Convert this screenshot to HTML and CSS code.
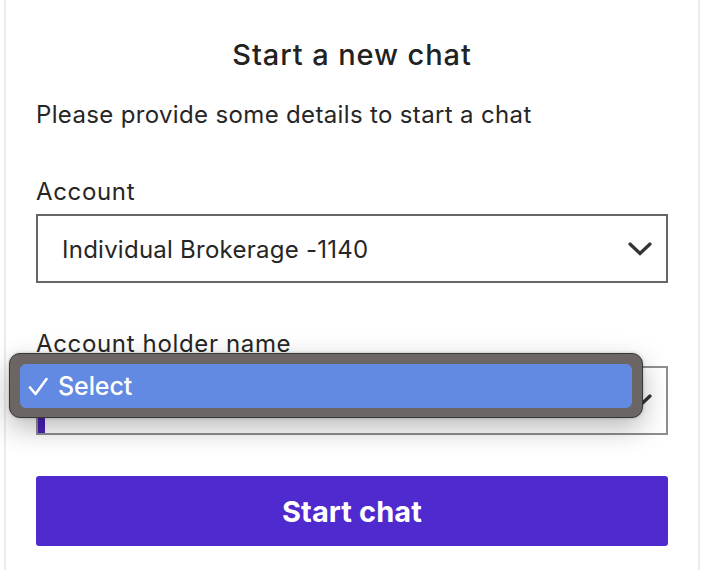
FILE: index.html
```html
<!DOCTYPE html>
<html lang="en">
<head>
<meta charset="utf-8">
<title>Start a new chat</title>
<link rel="stylesheet" href="styles.css">
</head>
<body>
<div class="panel">
  <h1 class="title">Start a new chat</h1>
  <p class="intro">Please provide some details to start a chat</p>
  <div class="field">
    <label class="label">Account</label>
    <div class="select">
      <span class="value">Individual Brokerage -1140</span>
      <svg class="chev" width="24" height="14" viewBox="0 0 24 14"><path d="M2 2 L12 11.5 L22 2" fill="none" stroke="#333" stroke-width="3.2" stroke-linecap="round" stroke-linejoin="miter"/></svg>
    </div>
  </div>
  <div class="field field-open">
    <label class="label">Account holder name</label>
    <div class="select select-open">
      <span class="value"></span>
      <svg class="chev" width="24" height="14" viewBox="0 0 24 14"><path d="M2 2 L12 11.5 L22 2" fill="none" stroke="#333" stroke-width="3.2" stroke-linecap="round" stroke-linejoin="miter"/></svg>
      <span class="caret"></span>
    </div>
    <div class="menu">
      <div class="menu-item">
        <svg class="check" width="20" height="19" viewBox="0 0 20 19"><path d="M2 10.5 L7.5 17 L18.5 2" fill="none" stroke="#fff" stroke-width="2.6" stroke-linecap="round" stroke-linejoin="round"/></svg>
        <span>Select</span>
      </div>
    </div>
  </div>
  <button class="btn">Start chat</button>
</div>
</body>
</html>
```
FILE: styles.css
```css
* { box-sizing: border-box; }
html, body { margin: 0; padding: 0; background: #fff; }
body {
  font-family: Inter, "Noto Sans", "Liberation Sans", sans-serif;
  color: #262626;
  width: 718px;
  height: 570px;
  overflow: hidden;
}
.panel {
  margin-left: 4px;
  width: 696px;
  height: 570px;
  border-left: 2px solid #ececec;
  border-right: 2px solid #ececec;
  padding: 37px 30px 0;
}
.title {
  margin: 0;
  font-size: 29px;
  line-height: 36px;
  font-weight: 500;
  text-align: center;
  letter-spacing: 0.9px;
  color: #222;
}
.intro {
  margin: 27px 0 0;
  font-size: 24px;
  line-height: 30px;
  font-weight: 400;
  letter-spacing: 0.35px;
  color: #262626;
}
.field { margin-top: 47px; position: relative; }
.field-open { margin-top: 46px; }
.label {
  display: block;
  font-size: 24px;
  line-height: 30px;
  letter-spacing: 0.65px;
  color: #262626;
}
.select {
  position: relative;
  margin-top: 7px;
  height: 69px;
  border: 2px solid #666;
  background: #fff;
  display: flex;
  align-items: center;
  justify-content: space-between;
  padding: 0 14px 0 24px;
}
.select .value {
  font-size: 24px;
  letter-spacing: 0.25px;
  color: #262626;
  padding-top: 2px;
}
.select-open { border-color: #8e8e8e; }
.caret {
  position: absolute;
  left: 0;
  bottom: 0;
  width: 7px;
  height: 16px;
  background: #4a22b8;
}
.menu {
  position: absolute;
  left: -27px;
  top: 24px;
  width: 634px;
  height: 65px;
  background: #6b6664;
  border: 1px solid #3a3737;
  border-radius: 11px;
  padding: 10px 10px 9px 10px;
  box-shadow: 0 10px 28px rgba(0, 0, 0, 0.28), 0 0 3px rgba(0, 0, 0, 0.25);
}
.menu-item {
  height: 44px;
  background: #628ae2;
  border-radius: 6px;
  display: flex;
  align-items: center;
  padding-left: 8px;
  gap: 10px;
  color: #fff;
  font-size: 25px;
  font-weight: 500;
  letter-spacing: -0.1px;
}
.check { flex: none; margin-top: 1px; }
.btn {
  display: block;
  width: 100%;
  margin-top: 41px;
  height: 70px;
  border: 0;
  border-radius: 3px;
  background: #4f2acf;
  color: #fff;
  font-family: Inter, "Noto Sans", "Liberation Sans", sans-serif;
  font-size: 29px;
  font-weight: 700;
  letter-spacing: 0.1px;
}
```
